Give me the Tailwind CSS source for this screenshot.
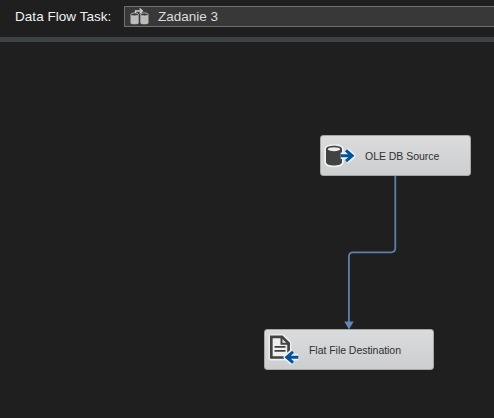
<!DOCTYPE html>
<html lang="en">
<head>
<meta charset="utf-8">
<title>Data Flow</title>
<script src="https://cdn.jsdelivr.net/npm/@tailwindcss/browser@4"></script>
</head>
<body class="bg-[#1f1f1f] font-['Liberation_Sans',sans-serif]">
<div class="flex h-[418px] w-[494px] flex-col overflow-hidden">
  <header class="flex h-[37px] shrink-0 items-start pt-[6px] pl-[15px]">
    <span class="w-[109px] shrink-0 text-[13.5px] leading-[21px] tracking-[0.04px] whitespace-nowrap text-[#f1f1f1]">Data Flow Task:</span>
    <div class="flex h-[21px] flex-1 items-center border border-r-0 border-[#707070] bg-[#383838] pl-[5px]">
      <svg class="mr-[9px] h-[17px] w-[19px] shrink-0" viewBox="0 0 19 17">
        <g fill="#bcbcbc">
          <path d="M0.5 6.5V15C0.5 16.8 8.7 16.8 8.7 15V6.5Z"/>
          <path d="M10.3 6.5V15C10.3 16.8 18.5 16.8 18.5 15V6.5Z"/>
        </g>
        <g fill="#383838" stroke="#cfcfcf" stroke-width=".8">
          <ellipse cx="4.6" cy="6.4" rx="3.7" ry="1.5"/>
          <ellipse cx="14.4" cy="6.4" rx="3.7" ry="1.5"/>
        </g>
        <path d="M5.5 5V3H12M9.6 .5L12.4 3L9.6 5.5" fill="none" stroke="#d0d0d0" stroke-width="1.4"/>
      </svg>
      <span class="text-[13.5px] leading-[19px] text-[#dcdcdc]">Zadanie 3</span>
    </div>
  </header>
  <div class="h-[5px] shrink-0 bg-[#3f4245]"></div>
  <main class="relative flex-1">
    <svg class="absolute inset-0 h-[376px] w-[494px]" viewBox="0 42 494 376">
      <path d="M395.3 176V248Q395.3 252.3 391 252.3H353.2Q348.9 252.3 348.9 256.6V323" fill="none" stroke="#5f7fab" stroke-width="1.8"/>
      <path d="M344.3 321.5H353.7L349 329.5Z" fill="#6486b4"/>
    </svg>
    <div class="absolute top-[93px] left-[319.5px] flex h-[41px] w-[151px] items-center rounded-[3px] border border-[#a6a6a7] bg-linear-to-b from-[#dadbdd] to-[#cdced0] pl-[2px]">
      <svg class="h-[30px] w-[34px] shrink-0" viewBox="323 141 34 30">
        <path d="M326 149V162C326 166.7 342 166.7 342 162V149C342 144.8 326 144.8 326 149Z" fill="#f0f0f1" stroke="#f0f0f1" stroke-width="3.4"/>
        <path d="M326 149V162C326 166.7 342 166.7 342 162V149C342 144.8 326 144.8 326 149Z" fill="#424242"/>
        <ellipse cx="334" cy="149.2" rx="6.2" ry="2" fill="#ececed"/>
        <path d="M340.7 155.8H352.3M346 150.4L352.2 155.8L346 161.2" fill="none" stroke="#f0f0f1" stroke-width="6.4" stroke-linejoin="round"/>
        <path d="M340.7 155.8H352.3M346 150.4L352.2 155.8L346 161.2" fill="none" stroke="#00539c" stroke-width="3"/>
      </svg>
      <span class="ml-[8.5px] text-[10.5px] leading-[14px] tracking-[-0.03px] whitespace-nowrap text-[#303030]">OLE DB Source</span>
    </div>
    <div class="absolute top-[287px] left-[263.5px] flex h-[41px] w-[170px] items-center rounded-[3px] border border-[#a6a6a7] bg-linear-to-b from-[#dadbdd] to-[#cdced0] pl-[2px]">
      <svg class="h-[34px] w-[34px] shrink-0" viewBox="267 333 34 34">
        <path d="M271.3 337H282.5L288.6 343V357.7H271.3Z" fill="#f0f0f1" stroke="#f0f0f1" stroke-width="5.4" stroke-linejoin="round"/>
        <path d="M271.3 336.8H282L288.6 343.3V357.5H271.3Z" fill="#efeff0" stroke="#424242" stroke-width="2.7"/>
        <path d="M281.5 336V343.8H289.5" fill="none" stroke="#424242" stroke-width="2"/>
        <path d="M274.5 346.8H285.5M274.5 350.8H285.5" stroke="#424242" stroke-width="1.8"/>
        <path d="M298.3 357.2H286.8M293 351.8L286.8 357.2L293 362.6" fill="none" stroke="#f0f0f1" stroke-width="6.4" stroke-linejoin="round"/>
        <path d="M298.3 357.2H286.8M293 351.8L286.8 357.2L293 362.6" fill="none" stroke="#00539c" stroke-width="3"/>
      </svg>
      <span class="ml-[8.5px] text-[10.5px] leading-[14px] tracking-[-0.04px] whitespace-nowrap text-[#303030]">Flat File Destination</span>
    </div>
  </main>
</div>
</body>
</html>
